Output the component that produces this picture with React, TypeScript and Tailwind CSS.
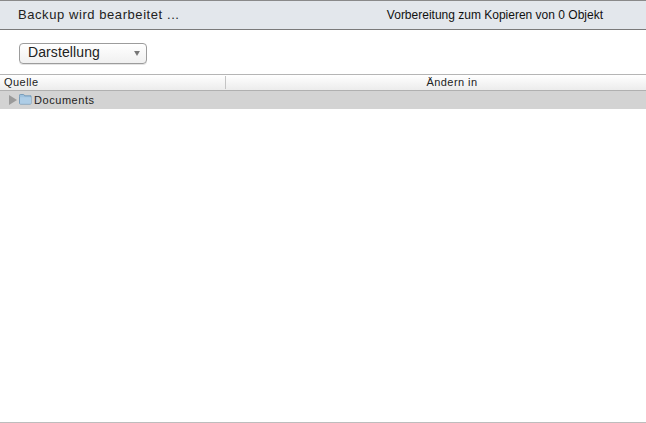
export default function App() {
  return (
    <div className="h-[423px] w-[646px] overflow-hidden bg-white flex flex-col text-black font-['Liberation_Sans',Arial,sans-serif]">
      {/* status bar */}
      <div className="h-[30px] shrink-0 bg-[#e3e7ec] border-t border-t-[#8a8a8a] border-b border-b-[#7a7a7a] flex items-center justify-between pl-[18px] pr-[43px]">
        <span className="text-[13px] tracking-[0.57px] text-[#222]">Backup wird bearbeitet ...</span>
        <span className="text-[12px] tracking-[0px] text-[#111]">Vorbereitung zum Kopieren von 0 Objekt</span>
      </div>

      {/* toolbar */}
      <div className="h-[44px] shrink-0 flex items-center pl-[19px] pt-[2px]">
        <div className="w-[128px] h-[21px] rounded-[4px] border border-[#9c9c9c] bg-gradient-to-b from-white to-[#f0f0f0] shadow-[0_1px_0_#e4e4e4] flex items-center justify-between pl-[8px] pr-[7px]">
          <span className="text-[14px] tracking-[0.1px] text-[#222] mb-[2px]">Darstellung</span>
          <svg width="6" height="5" viewBox="0 0 7 6" className="mr-[-1px]"><path d="M0 0h7L3.5 6z" fill="#767676" /></svg>
        </div>
      </div>

      {/* table header */}
      <div className="h-[17px] shrink-0 border-t border-t-[#b5b5b5] border-b border-b-[#b0b0b0] bg-gradient-to-b from-white to-[#ececec] flex items-center text-[11px] tracking-[0.45px] text-[#222]">
        <div className="w-[226px] h-[13px] shrink-0 border-r border-r-[#c4c4c4] pl-[4px] flex items-center">Quelle</div>
        <div className="flex-1 text-center pl-[32px]">Ändern in</div>
      </div>

      {/* rows */}
      <div className="h-[18px] shrink-0 bg-[#d3d3d3] flex items-center pl-[9px] text-[11px] tracking-[0.55px] text-[#222]">
        <svg width="8" height="10" viewBox="0 0 8 10" className="shrink-0"><path d="M0 0l8 5-8 5z" fill="#9a9a9a" /></svg>
        <svg width="13" height="11" viewBox="0 0 14 12" className="ml-[2px] mb-[2px] shrink-0">
          <path d="M.5 2.5V1.3c0-.5.3-.8.8-.8h3.4c.4 0 .6.2.8.5l.5 1h7v8.2c0 .6-.3.8-.8.8H1.3c-.5 0-.8-.3-.8-.8z" fill="#9fc2de" stroke="#6f96b6" />
          <path d="M1 3.5h12v6.7c0 .2-.1.3-.3.3H1.3c-.2 0-.3-.1-.3-.3z" fill="#aecde6" />
        </svg>
        <span className="ml-[2px]">Documents</span>
      </div>

      <div className="flex-1" />
      <div className="h-[1px] shrink-0 bg-[#bdbdbd]" />
    </div>
  );
}
